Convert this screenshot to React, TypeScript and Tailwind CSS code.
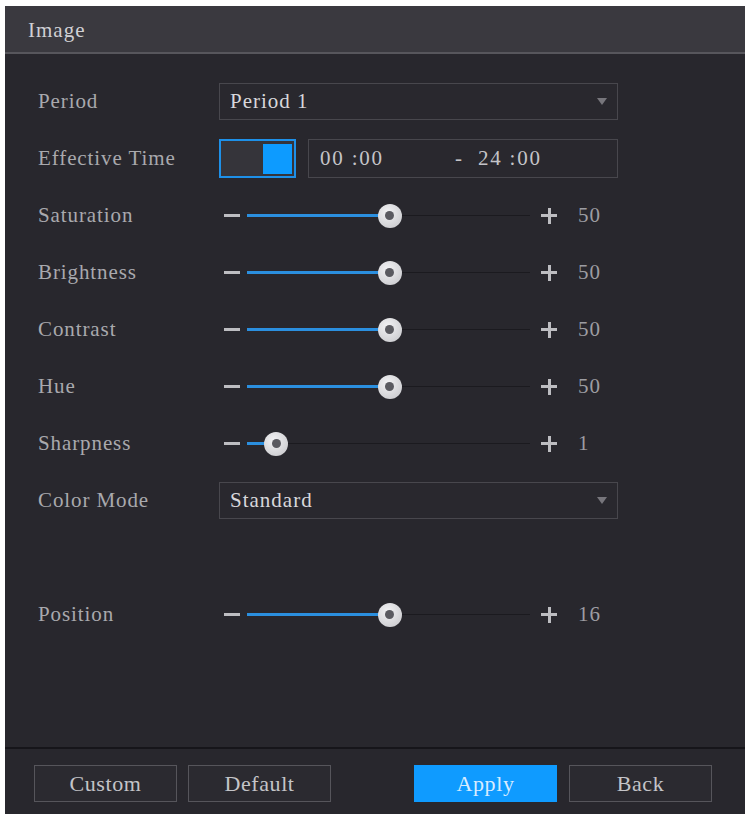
import React from "react";

const serif = { fontFamily: '"Liberation Serif", "Times New Roman", serif' };

function Caret() {
  return (
    <svg width="10" height="7" viewBox="0 0 10 7" className="mr-[10px]">
      <path d="M0 0 L10 0 L5 7 Z" fill="#77767c" />
    </svg>
  );
}

function Dropdown({ text }: { text: string }) {
  return (
    <div className="w-[399px] h-[37px] border border-[#48474d] bg-[#29282e] flex items-center justify-between">
      <span className="pl-[10px] text-[21px] tracking-[1px] text-[#d8d8dc]">{text}</span>
      <Caret />
    </div>
  );
}

function Slider({ frac, value }: { frac: number; value: string }) {
  return (
    <div className="w-[399px] h-[30px] flex items-center">
      <div className="ml-[5px] w-[16px] h-[3px] bg-[#bdbdc1]" />
      <div className="relative ml-[7px] w-[283px] h-[24px]">
        <div className="absolute left-0 right-0 top-[11.5px] h-px bg-[#1b1a1f]" />
        <div
          className="absolute left-0 top-[10.5px] h-[3px] bg-[#2b8fdf]"
          style={{ width: `${frac * 100}%` }}
        />
        <div
          className="absolute top-0 w-[24px] h-[24px] rounded-full bg-[radial-gradient(circle_at_40%_35%,#f2f2f4,#c4c4c8)] flex items-center justify-center"
          style={{ left: `calc(${frac * 100}% - 12px)` }}
        >
          <div className="w-[9px] h-[9px] rounded-full bg-[#5a5a60]" />
        </div>
      </div>
      <div className="relative ml-[11px] w-[16px] h-[16px]">
        <div className="absolute left-0 top-[6.5px] w-[16px] h-[3px] bg-[#bdbdc1]" />
        <div className="absolute left-[6.5px] top-0 w-[3px] h-[16px] bg-[#bdbdc1]" />
      </div>
      <span className="ml-[21px] text-[21px] tracking-[1px] text-[#9d9da2]">{value}</span>
    </div>
  );
}

function Row({ label, children }: { label?: string; children?: React.ReactNode }) {
  return (
    <div className="h-[57px] flex items-center pl-[33px]">
      <div className="w-[181px] text-[21px] tracking-[0.9px] text-[#a9a9ad]">{label}</div>
      {children}
    </div>
  );
}

function Btn({ text, primary }: { text: string; primary?: boolean }) {
  return (
    <div
      className={
        primary
          ? "w-[143px] h-[37px] bg-[#0f9bff] flex items-center justify-center text-[22px] tracking-[0.6px] text-[#d8ecff]"
          : "w-[143px] h-[37px] border border-[#56555b] bg-[#2b2a30] flex items-center justify-center text-[22px] tracking-[0.6px] text-[#c4c4c8]"
      }
    >
      {text}
    </div>
  );
}

export default function App() {
  return (
    <div className="w-[748px] h-[823px] bg-white pt-[6px] pl-[5px]" style={serif}>
      <div className="w-[740px] h-[808px] flex flex-col">
        <div className="h-[48px] bg-[#3a393f] border-b-2 border-[#57565c] flex items-center pl-[23px] pt-[3px] text-[21px] tracking-[1px] text-[#d0d0d4] shrink-0">
          Image
        </div>
        <div className="flex-1 bg-[#28272d] pt-[19px]">
          <Row label="Period">
            <Dropdown text="Period 1" />
          </Row>
          <Row label="Effective Time">
            <div className="w-[77px] h-[39px] border-2 border-[#1e90e8] bg-[#35343a] flex items-center justify-end pr-[2px]">
              <div className="w-[29px] h-[30px] bg-[#0d9bff]" />
            </div>
            <div className="ml-[12px] w-[310px] h-[39px] border border-[#48474d] bg-[#29282e] flex items-center text-[21px] tracking-[1.8px] text-[#c4c4c8] whitespace-pre">
              <span className="ml-[11px] w-[135px]">00 :00</span>
              <span>-  24 :00</span>
            </div>
          </Row>
          <Row label="Saturation">
            <Slider frac={0.505} value="50" />
          </Row>
          <Row label="Brightness">
            <Slider frac={0.505} value="50" />
          </Row>
          <Row label="Contrast">
            <Slider frac={0.505} value="50" />
          </Row>
          <Row label="Hue">
            <Slider frac={0.505} value="50" />
          </Row>
          <Row label="Sharpness">
            <Slider frac={0.103} value="1" />
          </Row>
          <Row label="Color Mode">
            <Dropdown text="Standard" />
          </Row>
          <Row />
          <Row label="Position">
            <Slider frac={0.505} value="16" />
          </Row>
        </div>
        <div className="h-[67px] shrink-0 bg-[#28272d] border-t-2 border-[#16151a] pt-[16px] pl-[29px] flex items-start">
          <Btn text="Custom" />
          <div className="ml-[11px]">
            <Btn text="Default" />
          </div>
          <div className="ml-[83px]">
            <Btn text="Apply" primary />
          </div>
          <div className="ml-[12px]">
            <Btn text="Back" />
          </div>
        </div>
      </div>
    </div>
  );
}
